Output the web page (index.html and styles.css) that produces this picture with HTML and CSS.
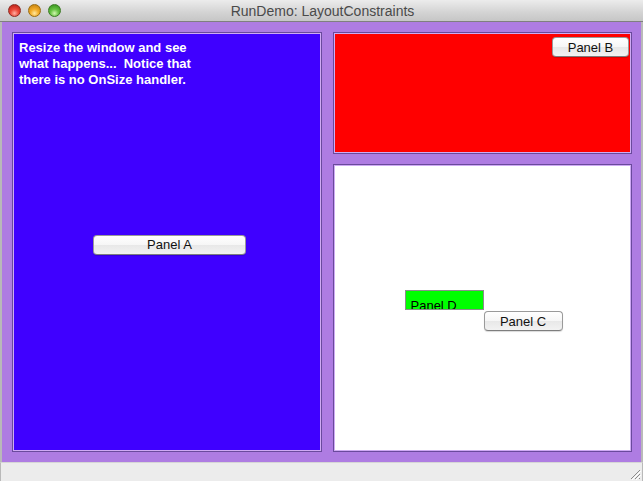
FILE: index.html
```html
<!DOCTYPE html>
<html>
<head>
<meta charset="utf-8">
<link rel="stylesheet" href="styles.css">
</head>
<body>
<div class="window">
  <div class="titlebar">
    <div class="lights">
      <span class="light red"></span>
      <span class="light yellow"></span>
      <span class="light green"></span>
    </div>
    <div class="title">RunDemo: LayoutConstraints</div>
  </div>
  <div class="content">
    <div class="panel panel-a">
      <p class="note">Resize the window and see<br>what happens...&nbsp; Notice that<br>there is no OnSize handler.</p>
      <button class="btn btn-a">Panel A</button>
    </div>
    <div class="right-col">
      <div class="panel panel-b">
        <button class="btn btn-b">Panel B</button>
      </div>
      <div class="panel panel-c">
        <div class="cluster">
          <div class="panel-d">Panel D</div>
          <button class="btn btn-c">Panel C</button>
        </div>
      </div>
    </div>
  </div>
  <div class="statusbar">
    <svg class="grip" width="12" height="12" viewBox="0 0 12 12">
      <path d="M11 2 L2 11 M11 6 L6 11 M11 10 L10 11" stroke="#8a8a8a" stroke-width="1"/>
      <path d="M12 3 L3 12 M12 7 L7 12" stroke="#ffffff" stroke-width="1"/>
    </svg>
  </div>
</div>
</body>
</html>
```

FILE: styles.css
```css
html, body {
  margin: 0;
  padding: 0;
  background: #ffffff;
}
body {
  font-family: "Liberation Sans", Arial, sans-serif;
  width: 643px;
  height: 481px;
  overflow: hidden;
}
.window {
  width: 643px;
  height: 481px;
  display: flex;
  flex-direction: column;
}
.titlebar {
  height: 22px;
  box-sizing: border-box;
  background: linear-gradient(#ececec, #d3d3d3 60%, #c6c6c6);
  border-bottom: 1px solid #7f7f7f;
  display: grid;
  grid-template-areas: "t";
  align-items: center;
}
.lights {
  grid-area: t;
  display: flex;
  gap: 7px;
  padding-left: 8px;
  align-self: center;
}
.light {
  width: 13px;
  height: 13px;
  border-radius: 50%;
  box-sizing: border-box;
}
.light.red {
  background: radial-gradient(circle at 50% 75%, #ffb0a4 0, #ec4a3c 40%, #b0180f 100%);
  border: 1px solid #8e2a22;
}
.light.yellow {
  background: radial-gradient(circle at 50% 75%, #ffe8a0 0, #f3ad2a 40%, #bd7808 100%);
  border: 1px solid #9a6c10;
}
.light.green {
  background: radial-gradient(circle at 50% 75%, #d2f6b0 0, #68c444 40%, #2f8a18 100%);
  border: 1px solid #3a7a22;
}
.title {
  grid-area: t;
  text-align: center;
  font-size: 14px;
  color: #4a4a4a;
  padding-left: 2px;
}
.content {
  height: 440px;
  box-sizing: border-box;
  background: #ae7ce2;
  border-left: 2px solid #b9b9b9;
  border-right: 2px solid #b9b9b9;
  padding: 10px 9px 10px 10px;
  display: flex;
  gap: 11px;
}
.panel {
  box-sizing: border-box;
  border: 1px solid #6a4a9c;
  box-shadow: inset 0 0 0 1px #cfaaf4;
}
.panel-a {
  width: 310px;
  height: 420px;
  background: #3f00ff;
  display: grid;
  grid-template-areas: "a";
}
.note {
  grid-area: a;
  align-self: start;
  justify-self: start;
  margin: 7px 0 0 6px;
  color: #ffffff;
  font-weight: bold;
  font-size: 13px;
  line-height: 16px;
}
.btn-a {
  grid-area: a;
  place-self: center;
  width: 153px;
  margin: 5px 0 0 5px;
}
.right-col {
  width: 299px;
  display: flex;
  flex-direction: column;
  gap: 10px;
}
.panel-b {
  height: 122px;
  background: #ff0000;
  display: flex;
  justify-content: flex-end;
  align-items: flex-start;
  padding: 4px 2px 0 0;
}
.btn-b {
  width: 77px;
}
.panel-c {
  height: 288px;
  background: #ffffff;
  display: flex;
  justify-content: center;
  align-items: center;
}
.cluster {
  display: grid;
  grid-template-columns: 79px 80px;
  grid-template-rows: 20px 20px;
  row-gap: 1px;
  margin: 5px 0 0 3px;
}
.panel-d {
  grid-column: 1;
  grid-row: 1;
  box-sizing: border-box;
  height: 20px;
  background: #00ff00;
  border: 1px solid #8c8c8c;
  font-size: 13px;
  line-height: 13px;
  padding: 8px 0 0 5px;
  overflow: hidden;
  color: #000;
}
.btn-c {
  grid-column: 2;
  grid-row: 2;
  width: 79px;
}
.btn {
  box-sizing: border-box;
  height: 20px;
  padding: 0;
  font-family: "Liberation Sans", Arial, sans-serif;
  font-size: 13px;
  color: #111;
  background: linear-gradient(#ffffff, #f6f6f6 50%, #e8e8e8 51%, #f2f2f2);
  border: 1px solid #9a9a9a;
  border-bottom-color: #7e7e7e;
  border-radius: 4px;
  box-shadow: 0 1px 1px rgba(0,0,0,0.15);
}
.statusbar {
  flex: 1;
  box-sizing: border-box;
  background: #ececec;
  border-top: 1px solid #d6d6d6;
  border-left: 1px solid #b9b9b9;
  border-right: 1px solid #b9b9b9;
  display: flex;
  justify-content: flex-end;
  align-items: flex-end;
  padding: 0 1px 1px 0;
}
.grip {
  display: block;
}
```
